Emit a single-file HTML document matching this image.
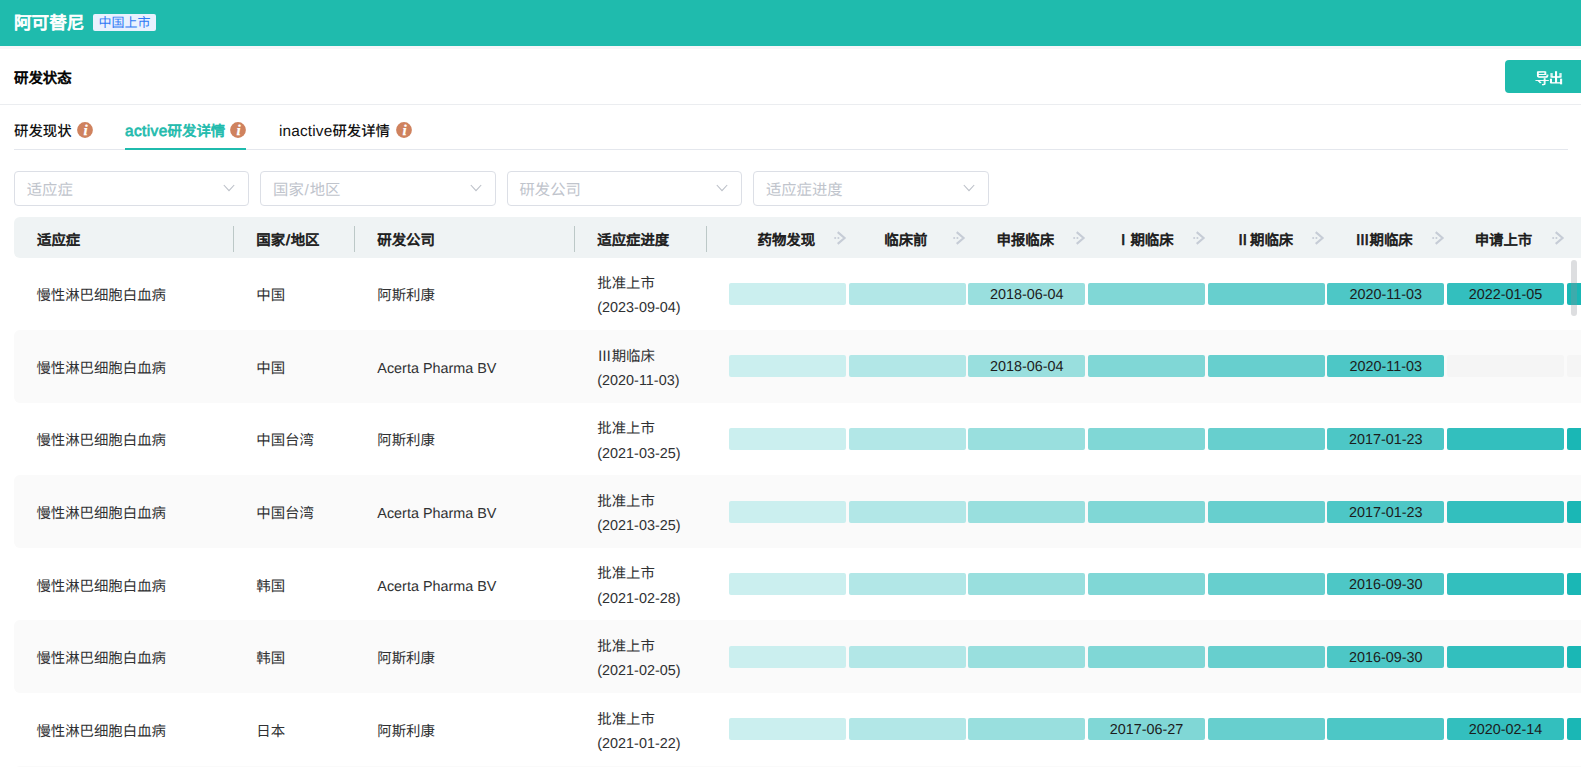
<!DOCTYPE html>
<html lang="zh-CN">
<head>
<meta charset="utf-8">
<title>阿可替尼</title>
<style>
*{box-sizing:border-box;margin:0;padding:0}
html,body{width:1581px;height:767px;overflow:hidden;background:#fff}
body{font-family:"Liberation Sans","Noto Sans CJK SC",sans-serif;font-size:14.4px;color:#303133;position:relative;text-rendering:geometricPrecision}
.fb{-webkit-text-stroke:.7px currentColor}
em{font-style:normal;padding:0 .8px}
.hdr{position:absolute;left:0;top:0;width:1581px;height:46px;background:#1fbbad}
.hdr .title{position:absolute;left:14px;top:10.3px;font-size:17.6px;line-height:26px;color:#fff;-webkit-text-stroke:.9px #fff}
.hdr .badge{position:absolute;left:93px;top:14px;width:63px;height:17px;border-radius:2px;background:#e9f1fe;color:#2f7af5;font-size:13px;line-height:18.4px;text-align:center}
.shadow{position:absolute;left:0;top:46px;width:1581px;height:3px;background:#f7f7f9}
.sec{position:absolute;left:14px;top:68px;line-height:22px;color:#000}
.btn{position:absolute;left:1505px;top:60px;width:90px;height:33px;border-radius:4px;background:#1fbbad;color:#fff;font-family:"Liberation Sans","WenQuanYi Zen Hei",sans-serif;font-weight:700;font-size:14.4px;line-height:36.4px;padding-left:29.7px;text-rendering:auto;text-shadow:.8px 0 0 #fff}
.hr1{position:absolute;left:0;top:104px;width:1581px;height:1px;background:#ebedf0}
.tabline{position:absolute;left:14px;top:149px;width:1554px;height:1px;background:#e4e7ed}
.tab{position:absolute;top:121px;height:22px;line-height:22px;color:#111;white-space:nowrap;font-weight:500}
.tab.on{color:#1fbbad;font-weight:400}
.tab b{font-weight:400;font-size:15.4px;letter-spacing:.4px}
.tab b.n{letter-spacing:.15px}
.ink{position:absolute;left:125px;top:148px;width:121px;height:2px;background:#1fbbad}
.info{position:absolute;top:121.6px;width:16px;height:16px}
.sel{position:absolute;top:171px;width:235.4px;height:35px;border:1px solid #dcdfe6;border-radius:4px;background:#fff;font-size:15.36px;line-height:37.6px;color:#c0c4cc;padding-left:11.7px}
.sel svg{position:absolute;right:13px;top:12.3px}
.th{position:absolute;left:14px;top:217px;width:1600px;height:41px;background:#eff3f4;border-radius:6px 0 0 6px;color:#1a1a1a}
.th span{position:absolute;top:11.6px;line-height:24.48px;white-space:nowrap}
.th span.s{width:117px;text-align:center}
.th i{position:absolute;top:9px;width:1px;height:26px;background:#bcc8c7}
.th svg{position:absolute;top:14.3px;width:14px;height:14px}
.row{position:absolute;left:14px;width:1600px;height:72.6px;border-radius:6px 0 0 6px}
.row.g{background:#fafafa}
.row .c{position:absolute;top:26.8px;line-height:24.48px;white-space:nowrap}
.row .p{position:absolute;left:583.3px;top:14.5px;line-height:24.48px;white-space:nowrap}
.bar{position:absolute;top:25.3px;width:117px;height:22px;border-radius:2px;text-align:center;line-height:24.8px;color:#1c1c1c}
.bar.e{background:#f5f5f5}
.thumb{position:absolute;left:1571px;top:260px;width:6px;height:56px;border-radius:3px;background:rgba(144,147,153,.3)}
.b1{left:715.00px;background:#cbefef}
.b2{left:834.67px;background:#b2e7e7}
.b3{left:954.33px;background:#99dfde}
.b4{left:1074.00px;background:#80d7d6}
.b5{left:1193.67px;background:#67cfce}
.b6{left:1313.34px;background:#4dc7c6}
.b7{left:1433.00px;background:#33bfbe}
.b8{left:1552.67px;background:#1ab7b5}
</style>
</head>
<body>
<div class="hdr"><span class="title">阿可替尼</span><span class="badge">中国上市</span></div>
<div class="shadow"></div>
<div class="sec fb">研发状态</div>
<div class="btn">导出</div>
<div class="hr1"></div>
<div class="tab" style="left:14px">研发现状</div><svg class="info" style="left:76.5px" viewBox="0 0 16 16"><circle cx="8" cy="8" r="7.9" fill="#cf825e"/><text x="8.5" y="13.1" font-family="Liberation Serif,serif" font-style="italic" font-weight="700" font-size="15" fill="#fff" stroke="#fff" stroke-width=".25" text-anchor="middle">i</text></svg>
<div class="tab on fb" style="left:125px"><b>active</b>研发详情</div><svg class="info" style="left:230.05px" viewBox="0 0 16 16"><circle cx="8" cy="8" r="7.9" fill="#cf825e"/><text x="8.5" y="13.1" font-family="Liberation Serif,serif" font-style="italic" font-weight="700" font-size="15" fill="#fff" stroke="#fff" stroke-width=".25" text-anchor="middle">i</text></svg>
<div class="tab" style="left:279px"><b class="n">inactive</b>研发详情</div><svg class="info" style="left:395.6px" viewBox="0 0 16 16"><circle cx="8" cy="8" r="7.9" fill="#cf825e"/><text x="8.5" y="13.1" font-family="Liberation Serif,serif" font-style="italic" font-weight="700" font-size="15" fill="#fff" stroke="#fff" stroke-width=".25" text-anchor="middle">i</text></svg>
<div class="tabline"></div><div class="ink"></div>
<div class="sel" style="left:14px">适应症<svg width="12" height="8" viewBox="0 0 12 8"><path d="M.8 1 6 6.6 11.2 1" fill="none" stroke="#bcc0c8" stroke-width="1.1"/></svg></div>
<div class="sel" style="left:260.4px">国家<em>/</em>地区<svg width="12" height="8" viewBox="0 0 12 8"><path d="M.8 1 6 6.6 11.2 1" fill="none" stroke="#bcc0c8" stroke-width="1.1"/></svg></div>
<div class="sel" style="left:506.8px">研发公司<svg width="12" height="8" viewBox="0 0 12 8"><path d="M.8 1 6 6.6 11.2 1" fill="none" stroke="#bcc0c8" stroke-width="1.1"/></svg></div>
<div class="sel" style="left:753.2px">适应症进度<svg width="12" height="8" viewBox="0 0 12 8"><path d="M.8 1 6 6.6 11.2 1" fill="none" stroke="#bcc0c8" stroke-width="1.1"/></svg></div>
<div class="th fb"><span style="left:23px">适应症</span><span style="left:242.3px">国家<em>/</em>地区</span><span style="left:363.3px">研发公司</span><span style="left:583.3px">适应症进度</span><i style="left:219px"></i><i style="left:340px"></i><i style="left:560px"></i><i style="left:692px"></i><span class="s" style="left:713.80px">药物发现</span><svg style="left:818.60px" viewBox="0 0 14 14"><circle cx="2.2" cy="7" r="1.05" fill="#c6ccd6"/><circle cx="5.4" cy="7" r="1.05" fill="#c6ccd6"/><path d="M4.7 1.1 11.6 7 4.7 12.9" fill="none" stroke="#c6ccd6" stroke-width="2.1"/></svg><span class="s" style="left:833.33px">临床前</span><svg style="left:938.27px" viewBox="0 0 14 14"><circle cx="2.2" cy="7" r="1.05" fill="#c6ccd6"/><circle cx="5.4" cy="7" r="1.05" fill="#c6ccd6"/><path d="M4.7 1.1 11.6 7 4.7 12.9" fill="none" stroke="#c6ccd6" stroke-width="2.1"/></svg><span class="s" style="left:952.85px">申报临床</span><svg style="left:1057.93px" viewBox="0 0 14 14"><circle cx="2.2" cy="7" r="1.05" fill="#c6ccd6"/><circle cx="5.4" cy="7" r="1.05" fill="#c6ccd6"/><path d="M4.7 1.1 11.6 7 4.7 12.9" fill="none" stroke="#c6ccd6" stroke-width="2.1"/></svg><span class="s" style="left:1072.38px">Ⅰ期临床</span><svg style="left:1177.60px" viewBox="0 0 14 14"><circle cx="2.2" cy="7" r="1.05" fill="#c6ccd6"/><circle cx="5.4" cy="7" r="1.05" fill="#c6ccd6"/><path d="M4.7 1.1 11.6 7 4.7 12.9" fill="none" stroke="#c6ccd6" stroke-width="2.1"/></svg><span class="s" style="left:1191.91px">Ⅱ期临床</span><svg style="left:1297.27px" viewBox="0 0 14 14"><circle cx="2.2" cy="7" r="1.05" fill="#c6ccd6"/><circle cx="5.4" cy="7" r="1.05" fill="#c6ccd6"/><path d="M4.7 1.1 11.6 7 4.7 12.9" fill="none" stroke="#c6ccd6" stroke-width="2.1"/></svg><span class="s" style="left:1311.43px">Ⅲ期临床</span><svg style="left:1416.93px" viewBox="0 0 14 14"><circle cx="2.2" cy="7" r="1.05" fill="#c6ccd6"/><circle cx="5.4" cy="7" r="1.05" fill="#c6ccd6"/><path d="M4.7 1.1 11.6 7 4.7 12.9" fill="none" stroke="#c6ccd6" stroke-width="2.1"/></svg><span class="s" style="left:1430.96px">申请上市</span><svg style="left:1536.60px" viewBox="0 0 14 14"><circle cx="2.2" cy="7" r="1.05" fill="#c6ccd6"/><circle cx="5.4" cy="7" r="1.05" fill="#c6ccd6"/><path d="M4.7 1.1 11.6 7 4.7 12.9" fill="none" stroke="#c6ccd6" stroke-width="2.1"/></svg><span class="s" style="left:1550.49px">批准上市</span><svg style="left:1656.27px" viewBox="0 0 14 14"><circle cx="2.2" cy="7" r="1.05" fill="#c6ccd6"/><circle cx="5.4" cy="7" r="1.05" fill="#c6ccd6"/><path d="M4.7 1.1 11.6 7 4.7 12.9" fill="none" stroke="#c6ccd6" stroke-width="2.1"/></svg></div>
<div class="row" style="top:257.45px"><div class="c" style="left:22.4px">慢性淋巴细胞白血病</div><div class="c" style="left:242.3px">中国</div><div class="c" style="left:363.3px">阿斯利康</div><div class="p">批准上市<br>(2023-09-04)</div><div class="bar b1"></div><div class="bar b2"></div><div class="bar b3">2018-06-04</div><div class="bar b4"></div><div class="bar b5"></div><div class="bar b6">2020-11-03</div><div class="bar b7">2022-01-05</div><div class="bar b8"></div></div>
<div class="row g" style="top:330.05px"><div class="c" style="left:22.4px">慢性淋巴细胞白血病</div><div class="c" style="left:242.3px">中国</div><div class="c" style="left:363.3px">Acerta Pharma BV</div><div class="p">Ⅲ期临床<br>(2020-11-03)</div><div class="bar b1"></div><div class="bar b2"></div><div class="bar b3">2018-06-04</div><div class="bar b4"></div><div class="bar b5"></div><div class="bar b6">2020-11-03</div><div class="bar b7 e"></div><div class="bar b8 e"></div></div>
<div class="row" style="top:402.65px"><div class="c" style="left:22.4px">慢性淋巴细胞白血病</div><div class="c" style="left:242.3px">中国台湾</div><div class="c" style="left:363.3px">阿斯利康</div><div class="p">批准上市<br>(2021-03-25)</div><div class="bar b1"></div><div class="bar b2"></div><div class="bar b3"></div><div class="bar b4"></div><div class="bar b5"></div><div class="bar b6">2017-01-23</div><div class="bar b7"></div><div class="bar b8"></div></div>
<div class="row g" style="top:475.25px"><div class="c" style="left:22.4px">慢性淋巴细胞白血病</div><div class="c" style="left:242.3px">中国台湾</div><div class="c" style="left:363.3px">Acerta Pharma BV</div><div class="p">批准上市<br>(2021-03-25)</div><div class="bar b1"></div><div class="bar b2"></div><div class="bar b3"></div><div class="bar b4"></div><div class="bar b5"></div><div class="bar b6">2017-01-23</div><div class="bar b7"></div><div class="bar b8"></div></div>
<div class="row" style="top:547.85px"><div class="c" style="left:22.4px">慢性淋巴细胞白血病</div><div class="c" style="left:242.3px">韩国</div><div class="c" style="left:363.3px">Acerta Pharma BV</div><div class="p">批准上市<br>(2021-02-28)</div><div class="bar b1"></div><div class="bar b2"></div><div class="bar b3"></div><div class="bar b4"></div><div class="bar b5"></div><div class="bar b6">2016-09-30</div><div class="bar b7"></div><div class="bar b8"></div></div>
<div class="row g" style="top:620.45px"><div class="c" style="left:22.4px">慢性淋巴细胞白血病</div><div class="c" style="left:242.3px">韩国</div><div class="c" style="left:363.3px">阿斯利康</div><div class="p">批准上市<br>(2021-02-05)</div><div class="bar b1"></div><div class="bar b2"></div><div class="bar b3"></div><div class="bar b4"></div><div class="bar b5"></div><div class="bar b6">2016-09-30</div><div class="bar b7"></div><div class="bar b8"></div></div>
<div class="row" style="top:693.05px"><div class="c" style="left:22.4px">慢性淋巴细胞白血病</div><div class="c" style="left:242.3px">日本</div><div class="c" style="left:363.3px">阿斯利康</div><div class="p">批准上市<br>(2021-01-22)</div><div class="bar b1"></div><div class="bar b2"></div><div class="bar b3"></div><div class="bar b4">2017-06-27</div><div class="bar b5"></div><div class="bar b6"></div><div class="bar b7">2020-02-14</div><div class="bar b8"></div></div>
<div class="row g" style="top:765.65px"></div>
<div class="thumb"></div>
</body>
</html>
